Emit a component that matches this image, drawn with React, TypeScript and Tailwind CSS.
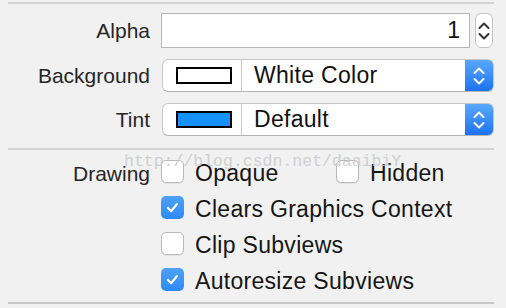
import React from 'react';

const font = { fontFamily: '"Liberation Sans", Arial, sans-serif' };

function Chevrons({ color }: { color: string }) {
  return (
    <svg width="14" height="24" viewBox="0 0 14 24" fill="none">
      <path d="M2.5 9l4.5-4.5 4.5 4.5" stroke={color} strokeWidth="2" strokeLinecap="round" strokeLinejoin="round" />
      <path d="M2.5 15l4.5 4.5 4.5-4.5" stroke={color} strokeWidth="2" strokeLinecap="round" strokeLinejoin="round" />
    </svg>
  );
}

function Checkbox({ checked }: { checked?: boolean }) {
  if (checked) {
    return (
      <div className="w-[23px] h-[23px] rounded-[5px] bg-gradient-to-b from-[#4ea2f8] to-[#2c89f4] flex items-center justify-center shrink-0">
        <svg width="15" height="15" viewBox="0 0 15 15" fill="none">
          <path d="M3 8l3 3.2L12 4" stroke="white" strokeWidth="2.2" strokeLinecap="round" strokeLinejoin="round" />
        </svg>
      </div>
    );
  }
  return (
    <div className="w-[23px] h-[23px] rounded-[5px] bg-white border border-[#b9b9b9] shadow-[0_1px_0_rgba(0,0,0,0.06)] shrink-0" />
  );
}

function ColorPopup({ swatch, label }: { swatch: string; label: string }) {
  return (
    <div className="ml-[12px] w-[332px] h-[33px] flex rounded-[6px] bg-white border border-[#c6c6c6] border-b-[#b4b4b4] overflow-hidden">
      <div className="w-[79px] h-full flex items-center pl-[13px] border-r border-[#c9c9c9]">
        <div className={`w-[56px] h-[17px] border-2 border-black ${swatch}`} />
      </div>
      <div className="flex-1 flex items-center pl-[12px] text-[23px] tracking-[0.3px] text-[#111]">{label}</div>
      <div className="w-[28px] h-full bg-gradient-to-b from-[#58a8fa] to-[#1b72ef] flex items-center justify-center">
        <Chevrons color="white" />
      </div>
    </div>
  );
}

function Label({ children, low }: { children: React.ReactNode; low?: boolean }) {
  return (
    <div className={`w-[150px] text-right text-[21px] text-[#262626] shrink-0 ${low ? 'relative top-[2px]' : ''}`}>
      {children}
    </div>
  );
}

function CheckItem({ checked, label }: { checked?: boolean; label: string }) {
  return (
    <div className="flex items-center gap-[11px]">
      <Checkbox checked={checked} />
      <span className="relative top-[2px] text-[23px] tracking-[0.3px] text-[#151515]">{label}</span>
    </div>
  );
}

export default function App() {
  return (
    <div className="relative w-[506px] h-[308px] bg-[#f1f1f1] overflow-hidden" style={font}>
      <div className="mt-[2px] ml-[8px] w-[486px] h-[2px] bg-[#d2d2d2]" />

      <div className="pt-[9px] flex flex-col gap-[11px]">
        <div className="flex items-center h-[35px]">
          <Label>Alpha</Label>
          <div className="ml-[11px] w-[309px] h-[35px] bg-white border border-[#b6b6b6] flex items-center justify-end pr-[9px] text-[23px] text-[#111]">
            1
          </div>
          <div className="ml-[5px] w-[18px] h-[35px] rounded-[6px] bg-white border border-[#c3c3c3] flex items-center justify-center">
            <Chevrons color="#333" />
          </div>
        </div>
        <div className="flex items-center h-[33px]">
          <Label>Background</Label>
          <ColorPopup swatch="bg-white" label="White Color" />
        </div>
        <div className="flex items-center h-[33px]">
          <Label>Tint</Label>
          <ColorPopup swatch="bg-[#1691fb]" label="Default" />
        </div>
      </div>

      <div className="mt-[12px] ml-[8px] w-[486px] h-[2px] bg-[#d2d2d2]" />

      <div className="pt-[10px] flex flex-col gap-[13px]">
        <div className="flex items-center h-[23px]">
          <Label low>Drawing</Label>
          <div className="ml-[11px] w-[175px]">
            <CheckItem label="Opaque" />
          </div>
          <CheckItem label="Hidden" />
        </div>
        <div className="flex items-center h-[23px] pl-[161px]">
          <CheckItem checked label="Clears Graphics Context" />
        </div>
        <div className="flex items-center h-[23px] pl-[161px]">
          <CheckItem label="Clip Subviews" />
        </div>
        <div className="flex items-center h-[23px] pl-[161px]">
          <CheckItem checked label="Autoresize Subviews" />
        </div>
      </div>

      <div className="mt-[11px] ml-[8px] w-[486px] h-[2px] bg-[#c8c8c8]" />

      <div
        className="absolute left-[124px] top-[150px] text-[16.5px] text-[#c8c8c8] opacity-80 pointer-events-none whitespace-nowrap"
        style={{ fontFamily: '"Liberation Mono", monospace' }}
      >
        http://blog.csdn.net/daaibiY
      </div>
    </div>
  );
}
